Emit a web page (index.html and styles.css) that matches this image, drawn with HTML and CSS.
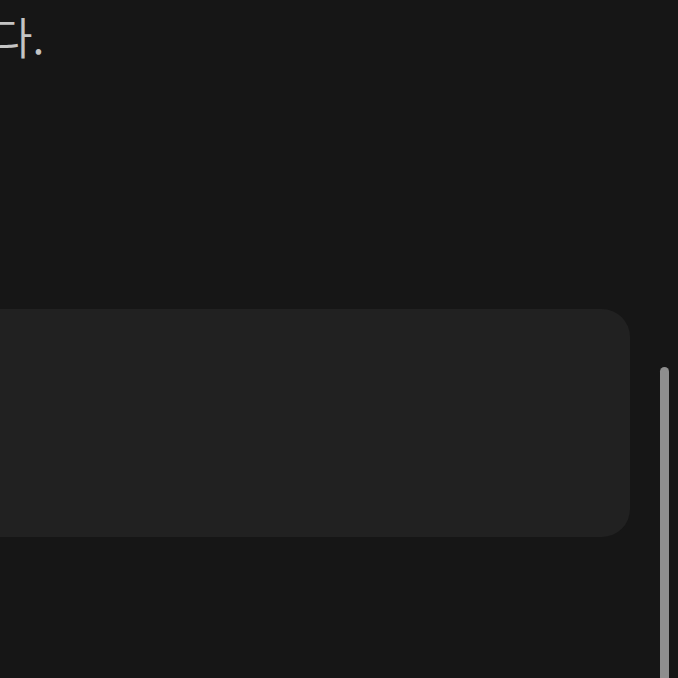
FILE: index.html
```html
<!DOCTYPE html>
<html lang="ko">
<head>
  <meta charset="UTF-8">
  <meta name="viewport" content="width=device-width, initial-scale=1.0">
  <title>Note</title>
  <link rel="stylesheet" href="styles.css">
</head>
<body>
  <div class="page">
    <p class="lead">합니다.</p>
    <div class="card"></div>
  </div>
  <div class="scroll-thumb"></div>
</body>
</html>
```

FILE: styles.css
```css
html, body {
  margin: 0;
  height: 100%;
}
body {
  background: #161616;
  font-family: "Noto Sans CJK KR", "Noto Sans", sans-serif;
  overflow: hidden;
  position: relative;
}
.page {
  margin-left: -120px;
  width: 750px;
  display: flex;
  flex-direction: column;
}
.lead {
  margin: 0;
  color: #c4c4c4;
  font-size: 44px;
  font-weight: 350;
  line-height: 1;
  padding-top: 14px;
  padding-left: 31px;
}
.card {
  margin-top: 251px;
  height: 228px;
  background: #212121;
  border-radius: 28px;
}
.scroll-thumb {
  position: absolute;
  left: 660px;
  top: 367px;
  width: 9px;
  height: 330px;
  background: #8e8e8e;
  border-radius: 5px;
}
```
